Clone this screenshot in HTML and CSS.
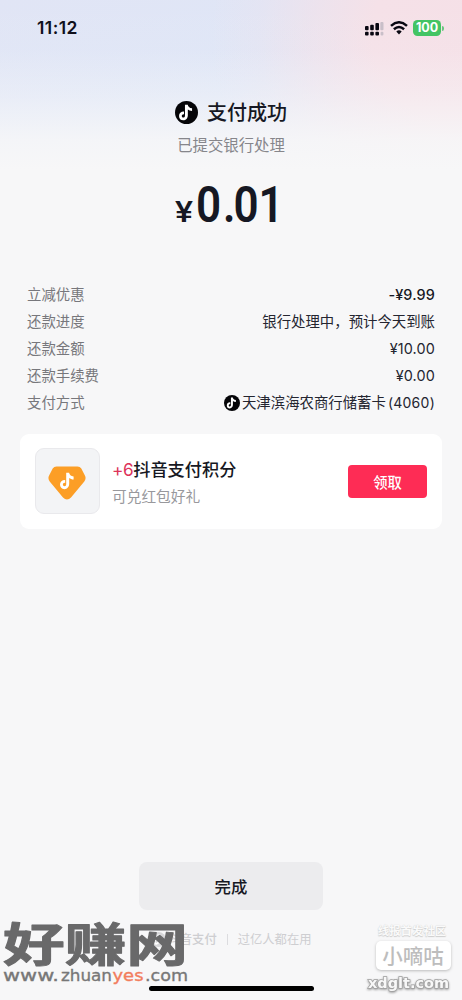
FILE: index.html
```
<!DOCTYPE html>
<html lang="zh-CN">
<head>
<meta charset="utf-8">
<title>支付成功</title>
<link rel="stylesheet" href="styles.css">
</head>
<body>
<svg width="0" height="0" class="defs">
  <defs>
    <path id="note" d="M10.400 3.800H13.300C13.600 5.700 15 7.200 17.800 7.600V10.500C16 10.300 14.500 9.700 13.400 8.900V14.800C13.400 17.900 11.300 20.200 8.700 20.200C5.900 20.200 4.200 18.200 4.200 15.600C4.200 12.700 6.500 10.800 9.400 11V13.900C8 13.700 7.100 14.500 7.100 15.600C7.100 16.700 7.900 17.300 8.700 17.300C9.800 17.300 10.400 16.500 10.400 15.100Z"/>
  </defs>
</svg>
<div class="screen">
  <header class="status">
    <span class="time">11:12</span>
    <div class="indicators">
      <svg class="signal" width="19" height="15" viewBox="0 0 19 15">
        <g fill="#080711"><rect x="0" y="5" width="3.600" height="4.300" rx="1"/><rect x="5.200" y="3.800" width="3.600" height="5.500" rx="1"/><rect x="10.400" y="2" width="3.600" height="7.300" rx="1"/><rect x="0" y="10.800" width="3.600" height="3.600" rx="1"/><rect x="5.200" y="10.800" width="3.600" height="3.600" rx="1"/><rect x="10.400" y="10.800" width="3.600" height="3.600" rx="1"/></g>
        <g fill="#c9bfc9"><rect x="15.300" y="1" width="3.200" height="8.300" rx="1"/><rect x="15.600" y="10.800" width="2.800" height="3.600" rx="1"/></g>
      </svg>
      <svg class="wifi" width="18" height="14" viewBox="0 0 18 14" fill="none" stroke="#080711" stroke-width="2.500"><path d="M1 4.900Q9-2.300 17 4.900"/><path d="M3.900 8.200Q9 3.700 14.100 8.200"/><path d="M6.300 10.400Q9 8.200 11.700 10.400L9 13.400Z" fill="#080711" stroke="none"/></svg>
      <div class="battery">100</div><i class="battery-tip"></i>
    </div>
  </header>

  <section class="result">
    <h1><svg width="23" height="23" viewBox="0 0 24 24"><circle cx="12" cy="12" r="12" fill="#050508"/><use href="#note" fill="#fff"/></svg><span>支付成功</span></h1>
    <p>已提交银行处理</p>
    <svg class="amount" width="110" height="44" viewBox="0 0 110 44"><text class="yen" x="0" y="38" textLength="18" lengthAdjust="spacingAndGlyphs">¥</text><g transform="scale(.88 1)"><text class="num" x="24 54.500 66.500 95" y="37.500">0.01</text></g></svg>
  </section>

  <dl class="details">
    <div><dt>立减优惠</dt><dd class="strong money">-¥9.99</dd></div>
    <div><dt>还款进度</dt><dd>银行处理中，预计今天到账</dd></div>
    <div><dt>还款金额</dt><dd class="money">¥10.00</dd></div>
    <div><dt>还款手续费</dt><dd class="money">¥0.00</dd></div>
    <div><dt>支付方式</dt><dd class="bank"><svg width="16" height="16" viewBox="0 0 24 24"><circle cx="12" cy="12" r="12" fill="#050508"/><use href="#note" fill="#fff"/></svg><span>天津滨海农商行储蓄卡</span><span class="tail">(4060)</span></dd></div>
  </dl>

  <section class="card">
    <div class="badge"><svg width="38" height="34" viewBox="0 0 38 34"><path d="M8.500 .5H29.500Q32 .5 33.300 2.500L36.900 9.500Q38.500 12.500 36.300 15.500L23 31.500Q19 35.500 15 31.500L1.700 15.500Q-.5 12.500 1.100 9.500L4.700 2.500Q6 .5 8.500 .5Z" fill="#fc9e26"/><g transform="translate(7.800 3)"><use href="#note" fill="#fff"/></g></svg></div>
    <div class="points"><h2><b>+6</b>抖音支付积分</h2><p>可兑红包好礼</p></div>
    <button class="claim">领取</button>
  </section>

  <footer class="bottom">
    <button class="done">完成</button>
    <div class="brand"><svg width="15" height="15" viewBox="0 0 24 24"><circle cx="12" cy="12" r="12" fill="#d6d6d8"/><use href="#note" fill="#fff"/></svg><b>抖音支付</b><i></i><span>过亿人都在用</span></div>
    <div class="home"></div>
  </footer>

  <svg class="mark-left" width="190" height="68" viewBox="0 0 190 68">
    <text class="mark-title" x="3" y="41" textLength="185" lengthAdjust="spacingAndGlyphs">好赚网</text>
    <text class="mark-url" x="3" y="61" textLength="56" lengthAdjust="spacingAndGlyphs">www.</text>
    <text class="mark-url" x="61" y="61" textLength="51" lengthAdjust="spacingAndGlyphs">zhuan</text>
    <text class="mark-url accent" x="112.500" y="61" textLength="31" lengthAdjust="spacingAndGlyphs">yes</text>
    <text class="mark-url" x="145" y="61" textLength="43" lengthAdjust="spacingAndGlyphs">.com</text>
  </svg>
  <div class="mark-right">
    <small>线报首发社区</small>
    <strong>小嘀咕</strong>
    <svg width="84" height="20" viewBox="0 0 84 20"><text x="1" y="15" textLength="81" lengthAdjust="spacingAndGlyphs">xdglt.com</text></svg>
  </div>
</div>
</body>
</html>
```
FILE: styles.css
```
* { box-sizing: border-box; }
body { margin: 0; }
h1, h2, p, dl, dd { margin: 0; }
button { border: 0; padding: 0; font-family: inherit; }
.defs { position: absolute; }
.screen {
  position: relative;
  width: 462px;
  height: 1000px;
  overflow: hidden;
  display: flex;
  flex-direction: column;
  color: #161823;
  font-family: Inter, "Noto Sans CJK SC", sans-serif;
  background:
    linear-gradient(to bottom, rgba(247,247,248,0) 0, rgba(247,247,248,.06) 50px, rgba(247,247,248,.4) 95px, rgba(247,247,248,.88) 140px, #f7f7f8 170px),
    radial-gradient(ellipse 270px 240px at 480px 35px, #f5e0e7 0, #f5e1e8 40%, rgba(245,225,232,.65) 60%, rgba(245,225,232,.2) 82%, rgba(245,225,232,0) 100%),
    linear-gradient(165deg, #e1e5f5 0, #dee6f7 150px, #e7eaf7 280px);
}
.status { height: 56px; padding: 0 19px 0 37px; display: flex; justify-content: space-between; align-items: center; }
.time { font: 600 17.5px/20px Inter, sans-serif; letter-spacing: .45px; color: #10101b; }
.indicators { display: flex; align-items: center; margin-right: -1px; }
.wifi { margin: 0 5px 0 6px; }
.battery { width: 28px; height: 16px; border-radius: 4.5px; background: #43c464; color: #fff; font: 700 12.5px/16px Inter, sans-serif; text-align: center; }
.battery-tip { width: 2px; height: 5px; margin-left: 1px; border-radius: 0 2px 2px 0; background: #69c57e; }
.result { height: 226.4px; padding-top: 43px; display: flex; flex-direction: column; align-items: center; }
.result h1 { height: 28px; display: flex; align-items: center; gap: 9px; font-size: 20px; font-weight: 500; line-height: 28px; }
.result h1 svg { margin-bottom: 1px; }
.result p { margin-top: 8px; font-size: 15.4px; line-height: 22px; color: #86868b; }
.amount { margin: 27px 3px 0 0; overflow: visible; }
.amount text { fill: #161823; font-family: Roboto, sans-serif; }
.amount .yen { font-size: 29px; font-weight: 500; }
.amount .num { font-size: 50px; font-weight: 600; }
.details { padding: 0 27px; font-size: 14.4px; }
.details > div { height: 26.9px; display: flex; justify-content: space-between; align-items: center; line-height: 26.9px; }
.details dt { color: #77777c; }
.details dd { color: #242530; }
.details .money { letter-spacing: .15px; }
.details .strong { color: #161823; font-weight: 500; }
.details .bank { display: flex; align-items: center; }
.bank span { margin-left: 2px; }
.bank .tail { margin-left: 2px; font-size: 14px; letter-spacing: .25px; }
.card { height: 95px; margin: 17px 20px 0; padding: 0 15px; display: flex; align-items: center; background: #fff; border-radius: 9px; }
.badge { width: 65px; height: 66px; display: flex; justify-content: center; align-items: center; border: 1px solid #e9e9ec; border-radius: 9px; background: #f3f4f6; }
.badge svg { margin: 3px 2px 0 0; }
.points { flex: 1; margin-left: 12px; padding-top: 2px; }
.points h2 { font-size: 17.2px; line-height: 25px; font-weight: 500; white-space: nowrap; }
.points b { color: #dd3359; font-weight: 400; letter-spacing: -.4px; }
.points p { margin-top: 4px; font-size: 14.7px; line-height: 22px; color: #98989c; }
.claim { width: 79px; height: 33px; border-radius: 4px; background: #fe2c55; color: #fff; font-size: 14.3px; font-weight: 500; }
.bottom { margin-top: auto; height: 138px; display: flex; flex-direction: column; align-items: center; }
.done { width: 184px; height: 48px; border-radius: 8px; background: #ececee; color: #161823; font-size: 16.4px; font-weight: 500; }
.brand { display: flex; align-items: center; height: 20px; margin: 19px 0 0; font-size: 12.3px; color: #ceced1; }
.brand b { font-weight: 500; margin-left: 2px; }
.brand i { width: 1px; height: 11px; margin: 0 10px; background: #dcdcdf; }
.home { width: 165px; height: 5px; margin: 37px 0 0; border-radius: 3px; background: #000; }
.mark-left { position: absolute; left: 0; top: 920px; overflow: visible; }
.mark-title { font: 700 46px "Noto Sans CJK SC", sans-serif; fill: #69696a; stroke: #69696a; stroke-width: 1px; stroke-linejoin: round; }
.mark-url { font: 400 16px "DejaVu Sans", sans-serif; fill: #777; stroke: #777; stroke-width: .35px; }
.accent { fill: #f27d5d; stroke: #f27d5d; }
.mark-right { position: absolute; left: 366px; top: 922px; width: 86px; display: flex; flex-direction: column; align-items: center; }
.mark-right small { font: 700 11.4px/16px "Noto Sans CJK SC", sans-serif; color: #fafafa; text-shadow: 0 1px 1px #ccc, 0 0 1px #ccc; margin-left: 6px; }
.mark-right strong { width: 75px; height: 29px; margin: 3px 0 0 8px; border-radius: 5px; background: #fff; box-shadow: 0 1px 3px #bbb; color: #bdbdbd; font: 500 20.5px/29px "Noto Sans CJK SC", sans-serif; text-align: center; }
.mark-right svg { margin-top: 3px; overflow: visible; }
.mark-right text { font: 700 13.5px "DejaVu Sans", sans-serif; fill: #f8f8f8; stroke: #a0a0a0; stroke-width: 1.4px; paint-order: stroke; filter: drop-shadow(0 1px 1px #999); }
```
